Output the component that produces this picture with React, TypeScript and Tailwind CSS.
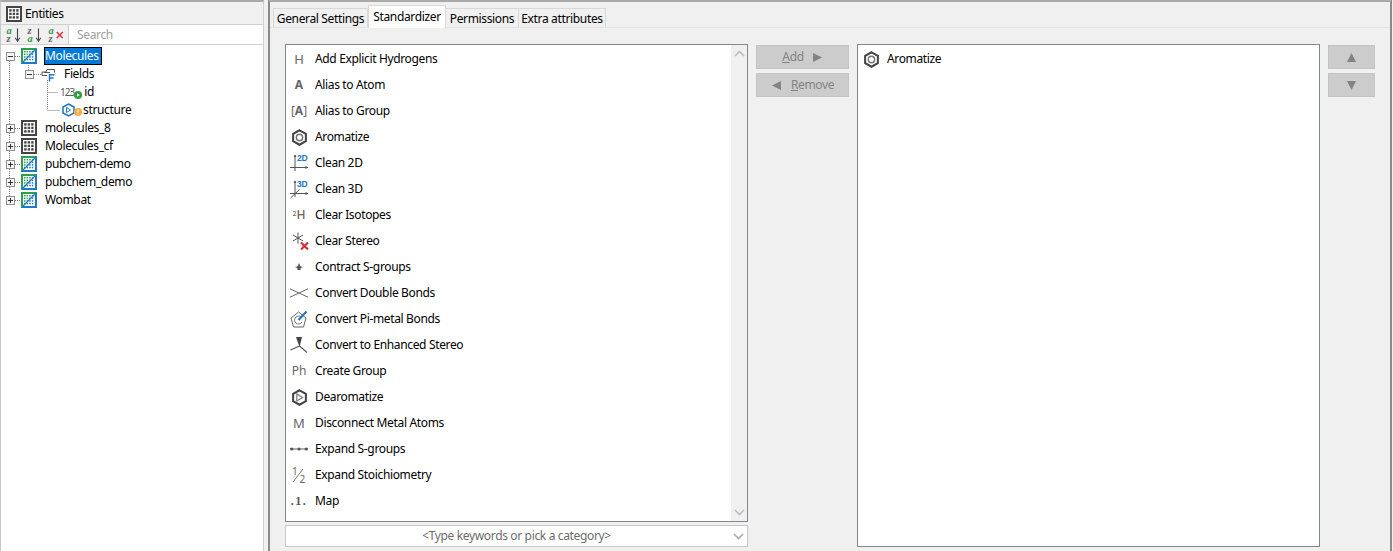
import React from "react";

const font = { fontFamily: '"Noto Sans", "Open Sans", sans-serif' };

function GridIcon({ size = 16 }: { size?: number }) {
  const dots: React.ReactNode[] = [];
  for (let r = 0; r < 3; r++) for (let c = 0; c < 3; c++) dots.push(<rect key={`${r}${c}`} x={3.2 + c * 3.5} y={3.2 + r * 3.5} width="2.4" height="2.4" fill="#444" />);
  return (
    <svg width={size} height={size} viewBox="0 0 16 16" className="shrink-0">
      <rect x="1" y="1" width="14" height="14" fill="#fff" stroke="#444" strokeWidth="2" />
      {dots}
    </svg>
  );
}

function EntityIcon() {
  const dots: React.ReactNode[] = [];
  for (let r = 0; r < 4; r++) for (let c = 0; c < 4; c++) {
    const x = 3 + c * 2.6, y = 3 + r * 2.6;
    dots.push(<rect key={`${r}${c}`} x={x} y={y} width="1.5" height="1.5" fill={x + y < 15 ? "#2e9e4f" : "#1f78c8"} />);
  }
  return (
    <svg width="16" height="16" viewBox="0 0 16 16" className="shrink-0">
      <rect width="16" height="16" fill="#2e9e4f" />
      <path d="M16 0V16H0Z" fill="#1f78c8" />
      <rect x="2" y="2" width="12" height="12" fill="#fff" />
      {dots}
      <path d="M14 2L2 14" stroke="#1f78c8" strokeWidth="1.3" />
    </svg>
  );
}

function Expander({ open }: { open?: boolean }) {
  return (
    <svg width="9" height="9" viewBox="0 0 9 9" className="shrink-0">
      <rect x="0.5" y="0.5" width="8" height="8" fill="#f4f4f4" stroke="#919191" />
      <path d="M2 4.5H7" stroke="#333" />
      {!open && <path d="M4.5 2V7" stroke="#333" />}
    </svg>
  );
}

function FieldsIcon() {
  return (
    <svg width="15" height="15" viewBox="0 0 15 15" className="shrink-0">
      <path d="M1 5H5L6 2.5H13.5V5.5M1 5V8.5H6" fill="none" stroke="#555" />
      <path d="M3 5.5H9" stroke="#555" />
      <path d="M8.5 14.5V7.8H13.5M8.5 11H12.5" fill="none" stroke="#1b74c9" strokeWidth="1.4" />
    </svg>
  );
}

function Hex({ inner, size = 17 }: { inner: "circle" | "kekule"; size?: number }) {
  return (
    <svg width={size} height={size} viewBox="0 0 16 16" className="shrink-0">
      <path d="M8 1.2L14 4.6V11.4L8 14.8L2 11.4V4.6Z" fill="#fff" stroke="#444" strokeWidth="1.9" />
      {inner === "circle" ? (
        <circle cx="8" cy="8" r="3" fill="none" stroke="#777" strokeWidth="1.3" />
      ) : (
        <path d="M5.5 4.8V11.2L10.8 8Z" fill="none" stroke="#777" strokeWidth="1.1" />
      )}
    </svg>
  );
}

function Badge({ kind }: { kind: "play" | "warn" }) {
  return kind === "play" ? (
    <svg width="8" height="8" viewBox="0 0 8 8" className="shrink-0">
      <circle cx="4" cy="4" r="4" fill="#2e9e3f" />
      <path d="M3 2.2L5.8 4L3 5.8Z" fill="#fff" />
    </svg>
  ) : (
    <svg width="8" height="8" viewBox="0 0 8 8" className="shrink-0">
      <circle cx="4" cy="4" r="4" fill="#f5a843" />
      <path d="M4 1.5V4.5M4 5.4V6.6" stroke="#fff" strokeWidth="1.2" />
    </svg>
  );
}

function SortIcon({ top, bottom, kind }: { top: string; bottom: string; kind: "arrow" | "x" }) {
  const tc = top === "a" ? "#3b9a4e" : "#666";
  const bc = bottom === "a" ? "#3b9a4e" : "#666";
  return (
    <svg width="16" height="16" viewBox="0 0 16 16" className="shrink-0 overflow-visible">
      <text x="0.5" y="6.5" fontSize="10.5" fontFamily="Liberation Serif, serif" fontStyle="italic" fontWeight="700" fill={tc}>{top}</text>
      <text x="0.5" y="14.5" fontSize="10.5" fontFamily="Liberation Serif, serif" fontStyle="italic" fontWeight="700" fill={bc}>{bottom}</text>
      {kind === "arrow" ? (
        <path d="M11.5 1.5V13M9.2 10.8L11.5 14.2L13.8 10.8" fill="none" stroke="#444" strokeWidth="1.1" />
      ) : (
        <path d="M8.8 5L14.8 11M14.8 5L8.8 11" stroke="#d9343a" strokeWidth="1.5" />
      )}
    </svg>
  );
}

function Axes({ label, three }: { label: string; three?: boolean }) {
  return (
    <svg width="20" height="20" viewBox="0 0 20 20" className="shrink-0">
      <path d="M6 2V18M1 14.5H19" stroke="#555" fill="none" />
      <path d="M4.5 4L6 1.5L7.5 4ZM16.5 13L19.5 14.5L16.5 16Z" fill="#555" />
      {three && <path d="M1.5 19L10.5 10.5" stroke="#555" />}
      <text x="8" y="8" fontSize="8.5" fontWeight="700" fontFamily="Liberation Sans, sans-serif" fill="#1b74c9">{label}</text>
    </svg>
  );
}

function T({ children, className = "" }: { children: React.ReactNode; className?: string }) {
  return <span className={`text-[#666] leading-none tracking-normal ${className}`}>{children}</span>;
}

const ClearStereo = () => (
  <svg width="20" height="20" viewBox="0 0 20 20" className="shrink-0">
    <path d="M9 1.5V12.5M4 4L14 10M14 4L4 10" stroke="#555" />
    <path d="M12 11.5L19 18.5M19 11.5L12 18.5" stroke="#d5303a" strokeWidth="2.2" />
  </svg>
);
const Contract = () => (
  <svg width="10" height="10" viewBox="0 0 10 10" className="shrink-0">
    <path d="M5 1L6.4 4.2L9 5.2L6.6 6V8H3.4V6L1 5.2L3.6 4.2Z" fill="#555" />
  </svg>
);
const DoubleBonds = () => (
  <svg width="18" height="10" viewBox="0 0 18 10" className="shrink-0">
    <path d="M0 0.8L9 5L18 0.8M0 9.2L9 5L18 9.2" fill="none" stroke="#666" />
  </svg>
);
const PiMetal = () => (
  <svg width="18" height="18" viewBox="0 0 18 18" className="shrink-0">
    <path d="M8.5 2L16 8L13.5 17H3.5L1 8Z" fill="#fff" stroke="#666" />
    <path d="M12 8A4 4 0 1 0 12 12" fill="none" stroke="#777" />
    <path d="M8.5 10L16.5 1.5" stroke="#1b74c9" strokeWidth="2" />
  </svg>
);
const Enhanced = () => (
  <svg width="18" height="18" viewBox="0 0 18 18" className="shrink-0">
    <path d="M6 1H12L9.5 11Z" fill="#444" />
    <path d="M9.5 10L0.5 14M9.5 10L17 16.5" stroke="#555" fill="none" strokeWidth="1.1" />
  </svg>
);
const ExpandS = () => (
  <svg width="18" height="6" viewBox="0 0 18 6" className="shrink-0">
    <path d="M0 3H18" stroke="#666" />
    <circle cx="1.8" cy="3" r="1.6" fill="#555" />
    <circle cx="9" cy="3" r="1.6" fill="#555" />
    <circle cx="16.2" cy="3" r="1.6" fill="#555" />
  </svg>
);
const Half = () => (
  <svg width="16" height="16" viewBox="0 0 16 16" className="shrink-0">
    <text x="1" y="8" fontSize="10" fontFamily="Noto Sans, sans-serif" fill="#666">1</text>
    <path d="M2 15L12 2" stroke="#777" />
    <text x="8.5" y="15.5" fontSize="10" fontFamily="Noto Sans, sans-serif" fill="#666">2</text>
  </svg>
);

const items: { label: string; icon: React.ReactNode }[] = [
  { label: "Add Explicit Hydrogens", icon: <T className="text-[13px]">H</T> },
  { label: "Alias to Atom", icon: <T className="text-[12px] font-bold">A</T> },
  { label: "Alias to Group", icon: <T className="text-[12px]">[<b>A</b>]</T> },
  { label: "Aromatize", icon: <Hex inner="circle" /> },
  { label: "Clean 2D", icon: <Axes label="2D" /> },
  { label: "Clean 3D", icon: <Axes label="3D" three /> },
  { label: "Clear Isotopes", icon: <T className="text-[12px] font-medium"><sup className="text-[7px]">2</sup>H</T> },
  { label: "Clear Stereo", icon: <ClearStereo /> },
  { label: "Contract S-groups", icon: <Contract /> },
  { label: "Convert Double Bonds", icon: <DoubleBonds /> },
  { label: "Convert Pi-metal Bonds", icon: <PiMetal /> },
  { label: "Convert to Enhanced Stereo", icon: <Enhanced /> },
  { label: "Create Group", icon: <T className="text-[12px]">Ph</T> },
  { label: "Dearomatize", icon: <Hex inner="kekule" /> },
  { label: "Disconnect Metal Atoms", icon: <T className="text-[13px]">M</T> },
  { label: "Expand S-groups", icon: <ExpandS /> },
  { label: "Expand Stoichiometry", icon: <Half /> },
  { label: "Map", icon: <span className="text-[#555] leading-none text-[12px] font-bold tracking-[1.5px] [font-family:'Liberation_Serif',serif]">.1.</span> },
];

function TreeRow({ indent, expander, icon, label, selected, labelGap = "ml-[7px]" }: { indent: string; expander?: React.ReactNode; icon: React.ReactNode; label: string; selected?: boolean; labelGap?: string }) {
  return (
    <div className={`flex items-center h-[18px] ${indent}`}>
      {expander}
      {icon}
      {selected ? (
        <span className={`${labelGap} h-[18px] pr-[2px] leading-[15px] bg-[#0078d7] text-white border border-black`}>{label}</span>
      ) : (
        <span className={`${labelGap} px-[1px] text-black`}>{label}</span>
      )}
    </div>
  );
}

function Btn({ children, className = "" }: { children: React.ReactNode; className?: string }) {
  return (
    <div className={`h-[24px] flex items-center justify-center bg-[#cccccc] border border-[#c4c4c4] text-[#838383] ${className}`}>{children}</div>
  );
}

const Tri = ({ dir }: { dir: "r" | "l" | "u" | "d" }) => {
  const d = { r: "M1 1L10 5.5L1 10Z", l: "M10 1L1 5.5L10 10Z", u: "M5.5 1L10 10H1Z", d: "M1 1H10L5.5 10Z" }[dir];
  return (
    <svg width="11" height="11" viewBox="0 0 11 11" className="shrink-0"><path d={d} fill="#838383" /></svg>
  );
};

const Chevron = ({ up, color = "#bdbdbd" }: { up?: boolean; color?: string }) => (
  <svg width="11" height="7" viewBox="0 0 11 7" className="shrink-0">
    <path d={up ? "M1 6L5.5 1.5L10 6" : "M1 1L5.5 5.5L10 1"} fill="none" stroke={color} strokeWidth="1.6" />
  </svg>
);

export default function App() {
  return (
    <div style={font} className="w-[1393px] h-[551px] flex bg-[#f0f0f0] text-[12px] tracking-[-0.35px] text-black overflow-hidden">
      <aside className="w-[264px] shrink-0 flex flex-col border-t-2 border-t-[#a9a9a9] border-l border-l-[#c8c8c8] border-r border-r-[#d0d0d0] bg-white relative">
        <div className="h-[23px] shrink-0 flex items-center gap-[3px] pl-[5px] pt-[1px] bg-[#f0f0f0] border-b border-[#d0d0d0]">
          <GridIcon size={16} />
          <span>Entities</span>
        </div>
        <div className="h-[20px] shrink-0 flex items-center bg-white border-b border-[#d0d0d0]">
          <div className="w-[67px] h-full shrink-0 flex items-center gap-[5px] pl-[5px] bg-[#f0f0f0]">
            <SortIcon top="a" bottom="z" kind="arrow" />
            <SortIcon top="z" bottom="a" kind="arrow" />
            <SortIcon top="a" bottom="z" kind="x" />
          </div>
          <div className="flex-1 pl-[8px] pt-[1px] border-l border-[#d0d0d0] h-full flex items-center text-[#a0a0a0]">Search</div>
        </div>
        <div className="relative pt-[2px]">
          <svg className="absolute left-0 top-0" width="70" height="160" viewBox="0 0 70 160">
            <g stroke="#777" strokeDasharray="1 1" fill="none">
              <path d="M8.5 16V155" />
              <path d="M14 11.5H20M14 83.5H20M14 101.5H20M14 119.5H20M14 137.5H20M14 155.5H20" />
              <path d="M27.5 18V25M33 29.5H40" />
              <path d="M46.5 35V65M46.5 47.5H57M46.5 65.5H59" />
            </g>
          </svg>
          <div className="relative">
            <TreeRow indent="pl-[5px]" expander={<Expander open />} icon={<span className="ml-[6px]"><EntityIcon /></span>} label="Molecules" selected labelGap="ml-[7px]" />
            <TreeRow indent="pl-[24px]" expander={<Expander open />} icon={<span className="ml-[7px]"><FieldsIcon /></span>} label="Fields" labelGap="ml-[7px]" />
            <TreeRow indent="pl-[59px]" icon={<span className="flex items-center"><span className="text-[10px] tracking-[-1px] text-[#555]">123</span><span className="mt-[5px]"><Badge kind="play" /></span></span>} label="id" labelGap="ml-[1px]" />
            <TreeRow indent="pl-[61px]" icon={<span className="flex items-center"><svg width="13" height="14" viewBox="0 0 13 14" className="shrink-0"><path d="M6.5 1L12 4V10L6.5 13L1 10V4Z" fill="#fff" stroke="#1b74c9" strokeWidth="1.5" /><path d="M4.5 4.5V9.5L8.5 7Z" fill="none" stroke="#1b74c9" /></svg><span className="mt-[4px] -ml-[1px]"><Badge kind="warn" /></span></span>} label="structure" labelGap="ml-[0px]" />
            <TreeRow indent="pl-[5px]" expander={<Expander />} icon={<span className="ml-[6px]"><GridIcon size={16} /></span>} label="molecules_8" />
            <TreeRow indent="pl-[5px]" expander={<Expander />} icon={<span className="ml-[6px]"><GridIcon size={16} /></span>} label="Molecules_cf" />
            <TreeRow indent="pl-[5px]" expander={<Expander />} icon={<span className="ml-[6px]"><EntityIcon /></span>} label="pubchem-demo" />
            <TreeRow indent="pl-[5px]" expander={<Expander />} icon={<span className="ml-[6px]"><EntityIcon /></span>} label="pubchem_demo" />
            <TreeRow indent="pl-[5px]" expander={<Expander />} icon={<span className="ml-[6px]"><EntityIcon /></span>} label="Wombat" />
          </div>
        </div>
      </aside>
      <div className="w-[4px] shrink-0" />
      <main className="flex-1 flex flex-col border-l-2 border-l-[#8a8a8a] border-r-2 border-r-[#8a8a8a] border-t-2 border-t-[#a9a9a9] mr-[1px]">
        <div className="h-[26px] shrink-0 flex items-end pl-[3px] border-b border-[#e4e4e4]">
          <div className="w-[95px] h-[19px] pt-[1px] flex items-center justify-center bg-[#f0f0f0] border border-b-0 border-[#d9d9d9]">General Settings</div>
          <div className="w-[78px] h-[23px] pb-[1px] -mb-[1px] flex items-center justify-center bg-white border border-b-0 border-[#d9d9d9]">Standardizer</div>
          <div className="w-[73px] h-[19px] pt-[1px] flex items-center justify-center bg-[#f0f0f0] border border-b-0 border-l-0 border-[#d9d9d9]">Permissions</div>
          <div className="w-[87px] h-[19px] pt-[1px] flex items-center justify-center bg-[#f0f0f0] border border-b-0 border-l-0 border-[#d9d9d9]">Extra attributes</div>
        </div>
        <div className="flex-1 flex pl-[15px] pt-[16px]">
          <div className="w-[463px] shrink-0 flex flex-col">
            <div className="h-[478px] shrink-0 flex bg-white border border-[#828790]">
              <div className="flex-1">
                {items.map((it) => (
                  <div key={it.label} className="h-[26px] flex items-center first:mt-[1px]">
                    <div className="w-[26px] shrink-0 flex items-center justify-center">{it.icon}</div>
                    <span className="ml-[3px]">{it.label}</span>
                  </div>
                ))}
              </div>
              <div className="w-[16px] shrink-0 bg-[#f0f0f0] flex flex-col items-center justify-between py-[5px]">
                <Chevron up />
                <Chevron />
              </div>
            </div>
            <div className="h-[22px] mt-[3px] shrink-0 flex items-center bg-white border border-[#c8c8c8]">
              <span className="flex-1 text-center text-[#6d6d6d] pl-[18px]">&lt;Type keywords or pick a category&gt;</span>
              <span className="w-[18px] flex justify-center"><Chevron color="#a8a8a8" /></span>
            </div>
          </div>
          <div className="w-[93px] shrink-0 ml-[8px] mt-[1px] flex flex-col gap-[4px]">
            <Btn className="gap-[8px]"><span><span className="underline">A</span>dd</span><Tri dir="r" /></Btn>
            <Btn className="gap-[9px]"><Tri dir="l" /><span><span className="underline">R</span>emove</span></Btn>
          </div>
          <div className="w-[463px] h-[503px] shrink-0 ml-[8px] bg-white border border-[#828790]">
            <div className="h-[26px] mt-[1px] flex items-center">
              <div className="w-[26px] shrink-0 flex items-center justify-center"><Hex inner="circle" /></div>
              <span className="ml-[3px]">Aromatize</span>
            </div>
          </div>
          <div className="w-[47px] shrink-0 ml-[8px] mt-[1px] flex flex-col gap-[4px]">
            <Btn><Tri dir="u" /></Btn>
            <Btn><Tri dir="d" /></Btn>
          </div>
        </div>
      </main>
    </div>
  );
}
